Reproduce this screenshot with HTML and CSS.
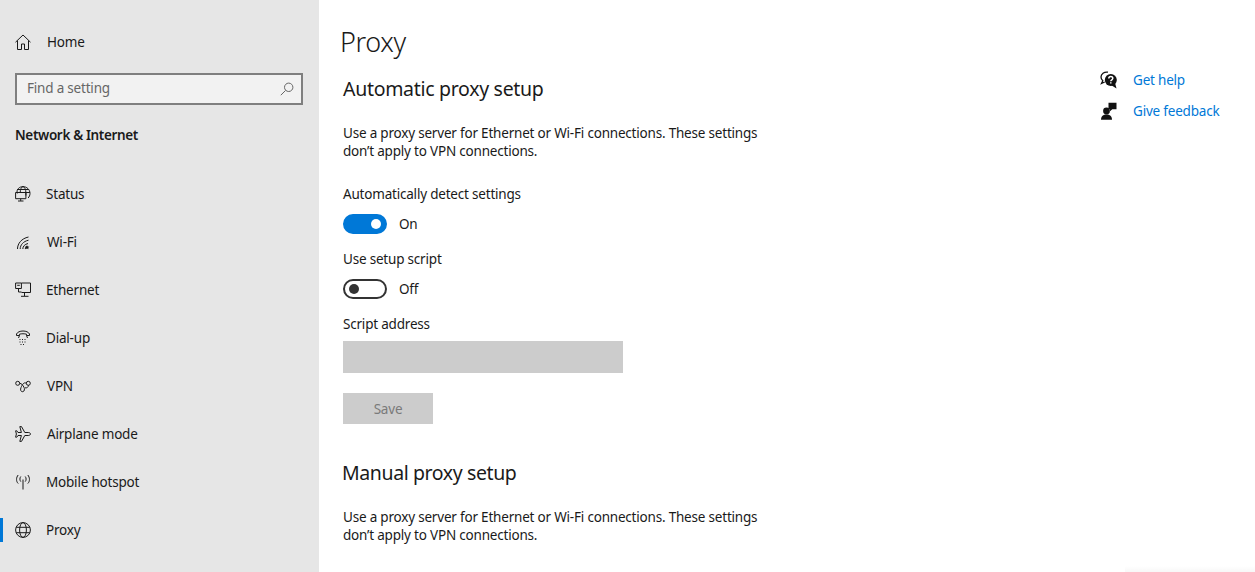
FILE: index.html
```html
<!DOCTYPE html>
<html lang="en">
<head>
    <meta charset="UTF-8">
    <title>Settings</title>
    <link rel="stylesheet" href="styles.css">
</head>
<body>
    <div class="window">
        <!-- sidebar -->
        <div class="sidebar">
            <div class="nav-item wide">
                <svg class="icon" viewBox="0 0 16 16"><path d="M.5 8.200 8 1l7.500 7.200M2.500 6.600v8.900h4V10h3v5.500h4V6.600"/></svg>
                <span>Home</span>
            </div>
            <div class="search">
                <span>Find a setting</span>
                <svg class="search-icon" viewBox="0 0 14 14"><circle cx="8.700" cy="5.300" r="4.200"/><path d="M5.600 8.400.8 13.200"/></svg>
            </div>
            <div class="group-title">Network &amp; Internet</div>
            <div class="nav-list">
                <div class="nav-item">
                    <svg class="icon" viewBox="0 0 16 16"><path d="M2.300 7.500C1 3.500 4.400.6 8 .6c3.800 0 7 3 7 6.800 0 1.800-.7 3.400-1.900 4.600M5.200 6.500C5.300 3.500 6.300.8 8 .6c1.700.2 2.800 3 2.900 6M2.200 3.500h11.600M5.200 6.500h9.700M10.900 6.500v3"/><path d="M.6 6.500h10.300v6.200H.6zM5.700 12.700v2.200M3 15h5.500"/></svg>
                    <span>Status</span>
                </div>
                <div class="nav-item wide">
                    <svg class="icon" viewBox="0 0 16 16"><path d="M2.500 15C2.500 9.500 6.500 4.500 13.500 3M5.200 15c0-4 3-7.600 8.300-8.800M7.800 15c0-2.600 2-4.800 5.200-5.500M10.300 15c0-1.300.9-2.400 2.200-2.800"/><path class="solid" d="M11.700 11.500l1.100 1.100 1.600.2-1.200 1 .3 1.500-1.500-.7-1.500.7.300-1.500-1.100-1 1.500-.2z"/></svg>
                    <span>Wi-Fi</span>
                </div>
                <div class="nav-item">
                    <svg class="icon" viewBox="0 0 16 16"><path d="M6.500 1h9v9.500h-9M9.500 10.500v3.500M6 14.300h7.500"/><path d="M.6 1h5.800v5.500H.6zM3.500 6.500v3.500h3M2.200 3.300h2.600"/></svg>
                    <span>Ethernet</span>
                </div>
                <div class="nav-item">
                    <svg class="icon" viewBox="0 0 16 16"><path d="M1.500 5.500V4C2.500 2 5 1 8 1s5.500 1 6.500 3v1.500h-3V4.200c-2-.6-5-.6-7 0v1.300zM4.500 5.500 3.500 8M11.500 5.500l1 2.500"/><path class="dots" d="M4.500 9.500h7M4.500 12h7M5.500 14.500h5"/></svg>
                    <span>Dial-up</span>
                </div>
                <div class="nav-item wide">
                    <svg class="icon" viewBox="0 0 16 16"><circle cx="2.700" cy="5.300" r="2"/><circle cx="13.300" cy="5.300" r="2"/><path d="M4.700 5.300c2 .2 3 1.800 4.200 3.800 1 1.700.7 4.400-1.200 4.600-2 .2-2.600-2.200-1.700-4.100C7.100 7 8.800 3.600 11.300 5.300M13.600 7.300c-.4 2-1.800 3-3.600 2.500"/></svg>
                    <span>VPN</span>
                </div>
                <div class="nav-item wide">
                    <svg class="icon" viewBox="0 0 16 16"><path d="M15.500 8c0-.8-1-1.500-2.200-1.500H9.800L6.500.6H4.800l1.600 5.900H3L1.800 4.800H.6L1.400 8 .6 11.200h1.200L3 9.500h3.400l-1.600 5.900h1.700l3.300-5.900h3.500c1.200 0 2.200-.7 2.200-1.500z"/></svg>
                    <span>Airplane mode</span>
                </div>
                <div class="nav-item">
                    <svg class="icon" viewBox="0 0 16 16"><path d="M8 5.500V15.500M5.800 2.500C4.600 4 4.600 6.200 5.800 7.600M10.200 2.500c1.200 1.500 1.200 3.700 0 5.100M3.200 1C1 3.500 1 7.500 3.200 9.500M12.800 1c2.200 2.500 2.200 6.500 0 8.500"/></svg>
                    <span>Mobile hotspot</span>
                </div>
                <div class="nav-item active">
                    <svg class="icon" viewBox="0 0 16 16"><circle cx="8" cy="8" r="7.400"/><ellipse cx="8" cy="8" rx="3.400" ry="7.400"/><path d="M1.200 5.300h13.600M1.200 10.700h13.600"/></svg>
                    <span>Proxy</span>
                </div>
            </div>
        </div>

        <!-- main -->
        <div class="content">
            <h1>Proxy</h1>
            <h2>Automatic proxy setup</h2>
            <p class="desc">Use a proxy server for Ethernet or Wi-Fi connections. These settings don’t apply to VPN connections.</p>

            <div class="field-label first">Automatically detect settings</div>
            <div class="toggle-row">
                <span class="toggle on"></span>
                <span>On</span>
            </div>

            <div class="field-label">Use setup script</div>
            <div class="toggle-row">
                <span class="toggle"></span>
                <span>Off</span>
            </div>

            <div class="field-label">Script address</div>
            <div class="text-box"></div>
            <div class="save-button">Save</div>

            <h2 class="manual">Manual proxy setup</h2>
            <p class="desc">Use a proxy server for Ethernet or Wi-Fi connections. These settings don’t apply to VPN connections.</p>
        </div>

        <!-- help links -->
        <div class="help">
            <div class="help-item">
                <svg class="help-icon" viewBox="0 0 18 18"><path class="thin" d="M8 1.200C4 .6 1 3 1 6c0 1.500.7 2.800 1.800 3.700L1.500 12.500l3.200-1.500"/><circle class="solid" cx="10.800" cy="9" r="6"/><path class="solid" d="M11 14l5.500 3.500-1.300-5z"/><path class="mark" d="M8.800 7.500c0-1.300 1-2 2-2s2 .7 2 1.800c0 1.500-2 1.500-2 3M10.800 11.200v1.300"/></svg>
                <a>Get help</a>
            </div>
            <div class="help-item">
                <svg class="help-icon" viewBox="0 0 18 18"><path class="solid" d="M8.500.8h8v6.400h-4.200L10 9.300V7.200H8.500z"/><circle class="solid" cx="6.500" cy="9" r="3.400"/><path class="solid" d="M1 17.800c0-3.700 2.200-5.300 5.500-5.300s5.500 1.600 5.500 5.300z"/></svg>
                <a>Give feedback</a>
            </div>
        </div>
    </div>
    <div class="corner-shadow"></div>
</body>
</html>
```

FILE: styles.css
```css
body {
    font-family: "Noto Sans", Arial, sans-serif;
    font-size: 13.5px;
    letter-spacing: -0.2px;
    color: #1a1a1a;
    background-color: white;
    margin: 0;
    padding: 0;
    height: 572px;
    overflow: hidden;
}

.window {
    display: flex;
    height: 572px;
}

/* sidebar */
.sidebar {
    width: 319px;
    flex-shrink: 0;
    background-color: #e6e6e6;
    padding-top: 18px;
    box-sizing: border-box;
}

.nav-item {
    display: flex;
    align-items: center;
    height: 48px;
    padding-left: 15px;
    gap: 15px;
    position: relative;
}

.nav-item span {
    line-height: 20px;
}

.icon {
    width: 16px;
    height: 16px;
    fill: none;
    stroke: #1a1a1a;
    stroke-width: 1;
}

.icon .solid {
    fill: #1a1a1a;
    stroke: none;
}

.icon .dots {
    stroke-dasharray: 1 1.500;
}

.nav-item.wide {
    gap: 16px;
}

.nav-item.active::before {
    content: "";
    position: absolute;
    left: 0;
    top: 12px;
    width: 3px;
    height: 24px;
    background-color: #0078d7;
}

.search {
    display: flex;
    align-items: center;
    justify-content: space-between;
    box-sizing: border-box;
    width: 288px;
    height: 32px;
    margin: 7px 0 0 15px;
    padding: 0 7px 2px 10px;
    border: 2px solid #7f7f7f;
    background-color: #f2f2f2;
    color: #666;
}

.search-icon {
    width: 14px;
    height: 14px;
    margin-top: 2px;
    fill: none;
    stroke: #666;
    stroke-width: 1;
}

.group-title {
    margin: 20px 0 0 15px;
    line-height: 20px;
    font-weight: 600;
    letter-spacing: -0.35px;
}

.nav-list {
    margin-top: 25px;
}

/* main */
.content {
    width: 440px;
    padding-left: 24px;
    flex-shrink: 0;
}

h1 {
    font-size: 27px;
    font-weight: 300;
    line-height: 36px;
    margin: 24px 0 0 -3px;
    letter-spacing: -0.4px;
}

h2 {
    font-size: 19.5px;
    font-weight: 400;
    line-height: 28px;
    margin: 15px 0 0;
    letter-spacing: -0.3px;
}

h2.manual {
    margin: 35px 0 0 -1px;
    letter-spacing: -0.4px;
}

.desc {
    margin: 21px 0 0;
    line-height: 18px;
    width: 425px;
}

.field-label {
    line-height: 20px;
    margin-top: 15px;
}

.field-label.first {
    margin-top: 24px;
}

.toggle-row {
    display: flex;
    align-items: center;
    gap: 12px;
    height: 20px;
    margin-top: 10px;
    line-height: 20px;
}

.toggle {
    display: block;
    box-sizing: border-box;
    width: 44px;
    height: 20px;
    border-radius: 10px;
    border: 2px solid #333;
    position: relative;
}

.toggle::after {
    content: "";
    position: absolute;
    left: 4px;
    top: 3px;
    width: 10px;
    height: 10px;
    border-radius: 50%;
    background-color: #333;
}

.toggle.on {
    background-color: #0078d7;
    border-color: #0078d7;
}

.toggle.on::after {
    left: auto;
    right: 4px;
    background-color: white;
}

.text-box {
    width: 280px;
    height: 32px;
    margin-top: 7px;
    background-color: #cccccc;
}

.save-button {
    display: flex;
    align-items: center;
    justify-content: center;
    width: 90px;
    height: 31px;
    margin-top: 20px;
    background-color: #cccccc;
    color: #7a7a7a;
}

/* help links */
.help {
    margin-left: 317px;
    padding-top: 64px;
}

.help-item {
    display: flex;
    align-items: center;
    gap: 15px;
    height: 31px;
    color: #0078d7;
}

.help-icon {
    width: 18px;
    height: 18px;
    fill: none;
}

.help-icon .solid {
    fill: #111;
}

.help-icon .thin {
    stroke: #111;
    stroke-width: 1.300;
}

.help-icon .mark {
    stroke: white;
    stroke-width: 1.500;
}

.corner-shadow {
    position: absolute;
    right: 0;
    bottom: 0;
    width: 130px;
    height: 6px;
    background: linear-gradient(to bottom, rgba(0, 0, 0, 0), rgba(0, 0, 0, 0.03));
}
```
